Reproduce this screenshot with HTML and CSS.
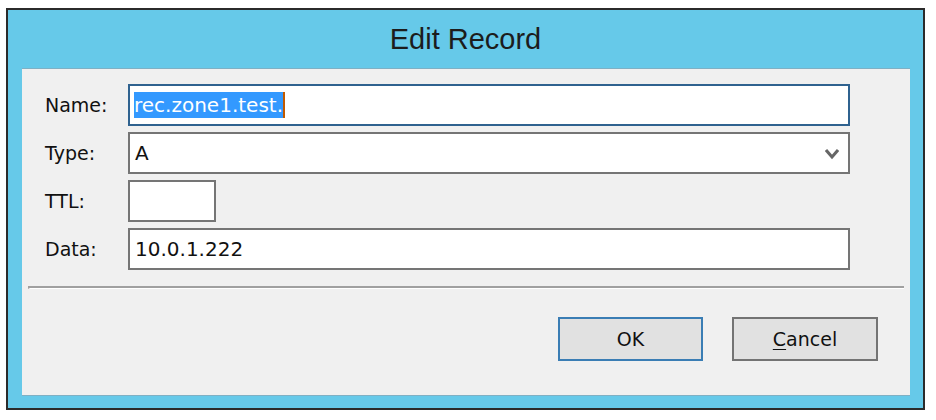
FILE: index.html
```html
<!DOCTYPE html>
<html>
<head>
<meta charset="utf-8">
<title>Edit Record</title>
<link rel="stylesheet" href="styles.css">
</head>
<body>
<div class="window">
  <div class="titlebar">Edit Record</div>
  <div class="panel">
    <div class="form">
      <div class="label">Name:</div>
      <div class="field focus"><span class="sel">rec.zone1.test.</span></div>
      <div class="label">Type:</div>
      <div class="field select"><span class="val">A</span>
        <svg class="chev" width="14" height="12" viewBox="0 0 14 12"><path d="M1 2 L7 9 L13 2" fill="none" stroke="#666" stroke-width="3" stroke-linejoin="miter"/></svg>
      </div>
      <div class="label">TTL:</div>
      <div class="field ttl"></div>
      <div class="label">Data:</div>
      <div class="field"><span class="val">10.0.1.222</span></div>
    </div>
    <div class="sep"></div>
    <div class="buttons">
      <div class="btn default">OK</div>
      <div class="btn"><span class="acc">C</span>ancel</div>
    </div>
  </div>
</div>
</body>
</html>
```
FILE: styles.css
```css
html, body {
  margin: 0;
  background: #ffffff;
}
.window {
  box-sizing: border-box;
  width: 919px;
  height: 402px;
  margin: 8px 0 0 6px;
  border: 2px solid #2b2b2b;
  background: #66c9e9;
  display: flex;
  flex-direction: column;
}
.titlebar {
  height: 58px;
  line-height: 58px;
  text-align: center;
  font-family: "Liberation Sans", Arial, sans-serif;
  font-size: 29px;
  color: #1c1c1c;
}
.panel {
  box-sizing: border-box;
  height: 328px;
  margin: 0 13px 0 14px;
  background: #f0f0f0;
  border-top: 1px solid #7fb0c4;
  border-bottom: 1px solid #7fb0c4;
  display: flex;
  flex-direction: column;
  font-family: "DejaVu Sans", sans-serif;
  color: #111;
}
.form {
  display: grid;
  grid-template-columns: 83px 722px;
  grid-auto-rows: 42px;
  row-gap: 6px;
  padding: 15px 0 0 23px;
}
.label {
  font-size: 19px;
  display: flex;
  align-items: center;
}
.field {
  box-sizing: border-box;
  background: #fff;
  border: 2px solid #757575;
  display: flex;
  align-items: center;
  padding-left: 4px;
  font-size: 20px;
}
.field.focus {
  border-color: #2f628f;
}
.field.ttl {
  width: 88px;
}
.field.select {
  justify-content: space-between;
  padding-right: 9px;
}
.sel {
  background: #3399ff;
  color: #fff;
  line-height: 26px;
  border-right: 2px solid #c25a00;
}
.val {
  line-height: 26px;
  padding-left: 1px;
}
.chev {
  display: block;
  margin-top: 1px;
}
.sep {
  box-sizing: border-box;
  height: 3px;
  margin: 16px 6px 0 6px;
  border-top: 2px solid #a0a0a0;
  border-bottom: 1px solid #ffffff;
  border-left: 2px solid #a0a0a0;
}
.buttons {
  display: flex;
  justify-content: flex-end;
  gap: 29px;
  margin-top: 28px;
  padding-right: 32px;
}
.btn {
  box-sizing: border-box;
  width: 146px;
  height: 44px;
  border: 2px solid #737373;
  background: #e1e1e1;
  display: flex;
  align-items: center;
  justify-content: center;
  font-size: 19px;
  color: #111;
}
.btn.default {
  border-color: #3a7db4;
  width: 145px;
}
.acc {
  text-decoration: underline;
  text-underline-offset: 3px;
}
```
